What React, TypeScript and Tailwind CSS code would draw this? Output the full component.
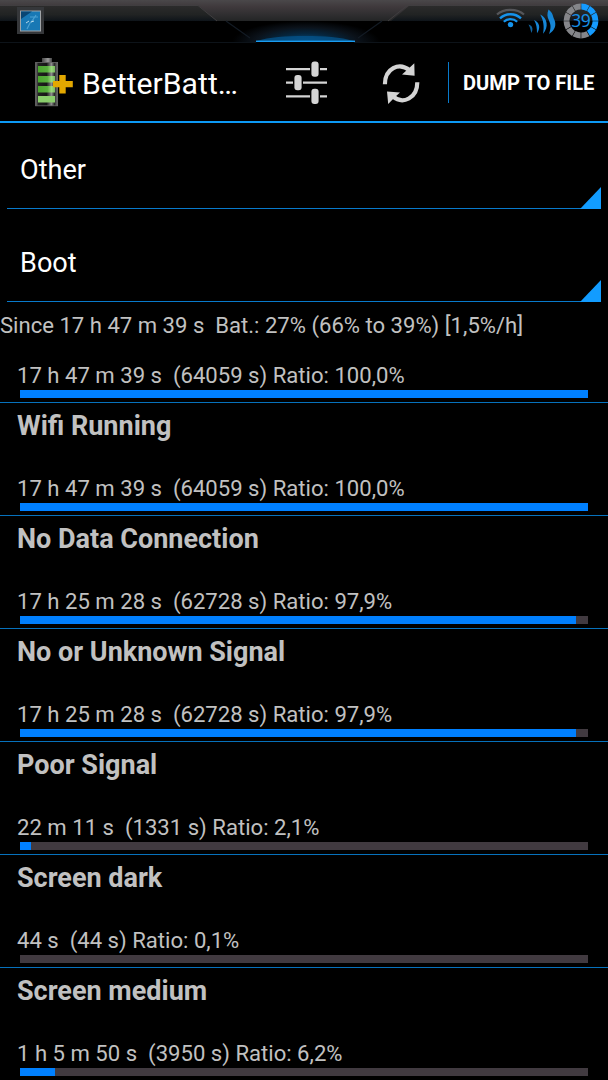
import React from 'react';

interface Stat {
  name?: string;
  detail: string;
  ratio: number;
}

const STATS: Stat[] = [
  { detail: '17 h 47 m 39 s  (64059 s) Ratio: 100,0%', ratio: 100 },
  { name: 'Wifi Running', detail: '17 h 47 m 39 s  (64059 s) Ratio: 100,0%', ratio: 100 },
  { name: 'No Data Connection', detail: '17 h 25 m 28 s  (62728 s) Ratio: 97,9%', ratio: 97.9 },
  { name: 'No or Unknown Signal', detail: '17 h 25 m 28 s  (62728 s) Ratio: 97,9%', ratio: 97.9 },
  { name: 'Poor Signal', detail: '22 m 11 s  (1331 s) Ratio: 2,1%', ratio: 2.1 },
  { name: 'Screen dark', detail: '44 s  (44 s) Ratio: 0,1%', ratio: 0.1 },
  { name: 'Screen medium', detail: '1 h 5 m 50 s  (3950 s) Ratio: 6,2%', ratio: 6.2 },
];

const BAR_WIDTH = 568;

const StatusBackdrop: React.FC = () => (
  <svg className="absolute inset-0" width="608" height="43" viewBox="0 0 608 43">
    <defs>
      <linearGradient id="metal" x1="0" y1="0" x2="0" y2="1">
        <stop offset="0" stopColor="#4a484a" />
        <stop offset="0.24" stopColor="#413c3f" />
        <stop offset="0.3" stopColor="#2b2b2b" />
        <stop offset="0.7" stopColor="#212323" />
        <stop offset="1" stopColor="#0e141a" />
      </linearGradient>
      <linearGradient id="metalMid" x1="0" y1="0" x2="0" y2="1">
        <stop offset="0" stopColor="#4a484a" />
        <stop offset="0.3" stopColor="#403a3d" />
        <stop offset="1" stopColor="#232526" />
      </linearGradient>
      <radialGradient id="glow" cx="0.5" cy="1" r="0.5" gradientTransform="translate(0 -1) scale(1 2)">
        <stop offset="0" stopColor="#04528a" />
        <stop offset="0.4" stopColor="#06263e" />
        <stop offset="0.7" stopColor="#0b121a" />
        <stop offset="1" stopColor="#000" />
      </radialGradient>
    </defs>
    <rect width="608" height="21" fill="url(#metal)" />
    <path d="M198 5L217 21H391L410 5V0H198Z" fill="url(#metalMid)" />
    <path d="M0 5.5H198L217 21M608 5.5H407L388 21" fill="none" stroke="#403e40" strokeWidth="1" />
    <rect x="232" y="21" width="148" height="21" fill="url(#glow)" />
    <path d="M226 21L250 38M382 21L358 38" stroke="#131b24" strokeWidth="1.2" />
    <path d="M256 41C270 37 285 36 305 36S340 37 354 41Z" fill="#04528a" opacity="0.8" />
    <path d="M0 42.5H256M354 42.5H608" stroke="#0d1319" />
    <rect x="256" y="40.6" width="99" height="1.4" fill="#1a9cf0" />
  </svg>
);

const WifiIcon: React.FC = () => (
  <svg width="31" height="21" viewBox="0 0 31 21" fill="none">
    <path d="M2 6.5C9 0.2 22 0.2 29 6.5" stroke="#55565a" strokeWidth="2.2" />
    <path d="M5 10.3C11 4.8 20 4.8 26 10.3" stroke="#1593ec" strokeWidth="2.4" />
    <path d="M8.8 13.8C12.5 10.2 18.5 10.2 22.2 13.8" stroke="#1593ec" strokeWidth="2.2" />
    <circle cx="15.5" cy="16.6" r="2.7" fill="#1593ec" />
  </svg>
);

const SignalIcon: React.FC = () => (
  <svg width="30" height="26" viewBox="0 0 30 26" fill="#1686d6">
    <path d="M0.5 15.5C4.5 16.5 5.5 20 3.4 24C2.6 21 2 18 0.5 15.5Z" opacity="0.75" />
    <path d="M6 11C11.5 13 13 19 9 24.3C9 19 8.5 15 6 11Z" />
    <path d="M12.2 5.5C19.5 9 21 18 15 24.8C16.5 17.5 15.5 11.5 12.2 5.5Z" />
    <path d="M20.5 0.5C25.5 4.5 24.5 7 26.5 11C28.5 16 27 21.5 21 25C23 19 23 16 21 11.5C19 7.5 19 5 20.5 0.5Z" />
  </svg>
);

// Twelve-segment charge ring, clockwise from the top
const BatteryRing: React.FC = () => (
  <svg width="36" height="36" viewBox="0 0 36 36">
    {Array.from({ length: 12 }, (_, i) => (
      <path
        key={i}
        d="M18.2 0.6A17.4 17.4 0 0 1 26.3 2.7L23.4 7.9A11.8 11.8 0 0 0 18.2 6.4Z"
        fill={i < 5 ? '#159bff' : '#85868a'}
        transform={`rotate(${i * 30 + 0.5} 18 18)`}
      />
    ))}
    <text x="17.8" y="24.2" textAnchor="middle" fontSize="17.5" letterSpacing="-0.4" fontFamily="Noto Sans, sans-serif" fill="#168ee4">39</text>
  </svg>
);

const StatusBar: React.FC = () => (
  <div className="relative flex h-[43px] shrink-0 items-start justify-between pl-[17px] pr-[9px]">
    <StatusBackdrop />
    <svg className="relative mt-[7px]" width="27" height="27" viewBox="0 0 27 27">
      <rect width="27" height="27" fill="#35373a" />
      <rect x="3.5" y="4" width="20" height="20" fill="#1878b4" stroke="#a0a4a7" />
      <path d="M4 4.5H15L4 12Z" fill="#084674" />
      <path d="M10 22L13 16L15 14L19 8M13 10H21" stroke="#4aa0d2" strokeWidth="1.2" fill="none" />
      <path d="M9 16L12 14M14 15L17 14" stroke="#b7d8e8" />
    </svg>
    <div className="relative flex items-start">
      <div className="mr-[2px] mt-[8px]"><WifiIcon /></div>
      <div className="mr-[5px] mt-[9px]"><SignalIcon /></div>
      <div className="mt-[3px]"><BatteryRing /></div>
    </div>
  </div>
);

const AppIcon: React.FC = () => (
  <svg width="39" height="50" viewBox="0 0 39 50">
    <defs>
      <linearGradient id="case" x1="0" x2="1">
        <stop offset="0" stopColor="#777" />
        <stop offset="0.12" stopColor="#222" />
        <stop offset="0.5" stopColor="#161616" />
        <stop offset="0.72" stopColor="#8d8d8d" />
        <stop offset="0.86" stopColor="#2a2a2a" />
        <stop offset="1" stopColor="#777" />
      </linearGradient>
      <linearGradient id="cell" x1="0" x2="1">
        <stop offset="0" stopColor="#4aa62e" />
        <stop offset="0.55" stopColor="#59ae3e" />
        <stop offset="0.8" stopColor="#9ad77e" />
        <stop offset="1" stopColor="#78bd5d" />
      </linearGradient>
      <linearGradient id="cap" x1="0" x2="1">
        <stop offset="0" stopColor="#444" />
        <stop offset="0.6" stopColor="#999" />
        <stop offset="1" stopColor="#444" />
      </linearGradient>
    </defs>
    <rect x="7" y="1" width="10" height="4.5" fill="url(#cap)" />
    <rect x="0.6" y="5.4" width="22" height="43.4" fill="url(#case)" stroke="#6c6c6c" strokeWidth="0.8" />
    <rect x="3" y="9" width="17" height="6.5" fill="url(#cell)" />
    <rect x="3" y="19" width="17" height="6.5" fill="url(#cell)" />
    <rect x="3" y="29" width="17" height="6.5" fill="url(#cell)" />
    <rect x="3" y="39" width="17" height="6.5" fill="#8ace6c" />
    <path d="M24.3 18H30.7V24H37.8V30.2H30.7V36.5H24.3V30.2H18V24H24.3Z" fill="#e3a800" />
  </svg>
);

const SlidersIcon: React.FC = () => (
  <svg width="42" height="44" viewBox="0 0 42 44" fill="#d4d4d4">
    <path d="M1 7H25V9.2H1ZM35 7H42V9.2H35ZM1 20.6H8V22.8H1ZM18 20.6H42V22.8H18ZM1 34.2H25V36.4H1ZM35 34.2H42V36.4H35Z" />
    <rect x="26.4" y="0.5" width="7.2" height="15.2" rx="3" />
    <rect x="9.4" y="14" width="7.2" height="15.2" rx="3" />
    <rect x="26.4" y="27.8" width="7.2" height="15.2" rx="3" />
  </svg>
);

const RefreshIcon: React.FC = () => (
  <svg width="38" height="42" viewBox="0 0 38 42">
    <path d="M2.9 21.2C2.9 5.5 17 -1.6 27.8 7.4" fill="none" stroke="#d4d4d4" strokeWidth="4.2" />
    <path d="M32.3 0.3L32.6 12.8L20 11.4L25 7Z" fill="#d4d4d4" />
    <path d="M35.3 19.2C35.3 35 21 42.2 10.5 33.2" fill="none" stroke="#d4d4d4" strokeWidth="4.2" />
    <path d="M6.2 41L5 28.5L18 29.4L13 34Z" fill="#d4d4d4" />
  </svg>
);

const ActionBar: React.FC = () => (
  <div className="flex h-[80px] shrink-0 items-center border-b-2 border-[#0c99f5] pl-[35px]">
    <div className="w-[47px]"><AppIcon /></div>
    <h1 className="w-[203px] whitespace-pre pt-[4px] text-[30.2px] leading-none text-white">BetterBatt…</h1>
    <div className="w-[97px] pt-[1px]"><SlidersIcon /></div>
    <div className="w-[66px] pt-[3px]"><RefreshIcon /></div>
    <button className="flex h-[41px] items-center whitespace-pre border-l border-[#087acb] pl-[14px] pt-[2px] text-[20.1px] font-bold text-white">DUMP TO FILE</button>
  </div>
);

const Spinner: React.FC<{ label: string }> = ({ label }) => (
  <div className="relative mx-[7px] flex h-[93px] items-center border-b border-[#087acb] pl-[13px] pt-[16px] text-[27.1px] text-white">
    <span>{label}</span>
    <svg className="absolute -bottom-px right-0" width="21" height="22" viewBox="0 0 21 22">
      <path d="M21 0V22H0Z" fill="#129cff" />
    </svg>
  </div>
);

const StatRow: React.FC<{ stat: Stat }> = ({ stat }) => (
  <div className={`flex shrink-0 flex-col border-b border-[#0671bc] ${stat.name ? 'h-[113px]' : 'h-[61px]'}`}>
    {stat.name && (
      <h2 className="mb-[30px] ml-[17px] mt-[5px] h-[37px] whitespace-pre text-[27px] font-bold leading-[37px] text-[#c1c1c1]">{stat.name}</h2>
    )}
    <p className={`ml-[17px] whitespace-pre text-[22.12px] leading-[26px] text-[#c1c1c1] ${stat.name ? '' : 'mt-[20px]'}`}>{stat.detail}</p>
    <div className="ml-[20px] mt-[2px] h-[8px] w-[568px] shrink-0 bg-[#413a40]">
      <div className="h-full bg-[#0080ff]" style={{ width: Math.floor((BAR_WIDTH * stat.ratio) / 100) }} />
    </div>
  </div>
);

const App: React.FC = () => {
  return (
    <div className="flex h-[1080px] w-[608px] flex-col overflow-hidden bg-black font-['Roboto',sans-serif]">
      <StatusBar />
      <ActionBar />
      <div className="-mt-[7px] flex flex-col">
        <Spinner label="Other" />
        <Spinner label="Boot" />
      </div>
      <p className="h-[40px] shrink-0 whitespace-pre pt-[10px] text-[22.1px] leading-[26px] text-[#c1c1c1]">
        Since 17 h 47 m 39 s  Bat.: 27% (66% to 39%) [1,5%/h]
      </p>
      <div className="flex flex-col">
        {STATS.map((stat, i) => (
          <StatRow key={i} stat={stat} />
        ))}
      </div>
    </div>
  );
};

export default App;
